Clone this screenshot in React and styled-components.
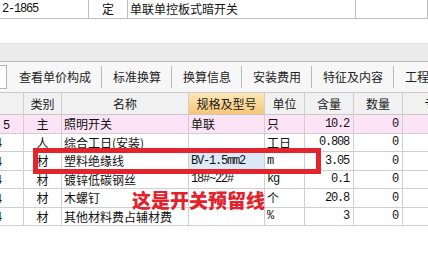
import React from 'react'
import styled, { createGlobalStyle } from 'styled-components'

const GlobalStyle = createGlobalStyle`
    body {
        margin: 0;
        background: #ffffff;
    }
`

const Page = styled.div`
    position: relative;
    width: 428px;
    height: 254px;
    overflow: hidden;
    background: #ffffff;
    font-family: "Noto Sans CJK SC", "Noto Sans", sans-serif;
    font-size: 12px;
    color: #111;
`

const TopRow = styled.div`
    display: grid;
    grid-template-columns: 89px 39px 228px 72px;
    height: 18px;
    border-bottom: 1px solid #bdbdbd;
`

const TopCell = styled.div`
    display: flex;
    align-items: center;
    justify-content: ${p => (p.$center ? 'center' : 'flex-start')};
    padding-left: ${p => (p.$center ? 0 : 2)}px;
    border-right: 1px solid #bdbdbd;
    white-space: nowrap;
    overflow: hidden;
    line-height: 18px;
`

const Mono = styled.span`
    font-family: "Liberation Mono", "DejaVu Sans Mono", monospace;
    font-size: 12px;
    letter-spacing: -1.2px;
`

const Blank = styled.div`
    height: 24px;
`

const GrayBand = styled.div`
    height: 17px;
    background: #ebebeb;
    border-top: 1px solid #e4e4e4;
    border-bottom: 1px solid #b9b9b9;
`

const Toolbar = styled.div`
    display: flex;
    align-items: center;
    height: 30px;
    background: #f7f7f7;
    border-bottom: 1px solid #c9c9c9;
    white-space: nowrap;
    overflow: hidden;

    & > * {
        flex-shrink: 0;
    }
`

const EdgeTab = styled.div`
    width: 6px;
    height: 22px;
    background: #ffffff;
    border: 1px solid #b5b5b5;
    border-left: none;
    margin-right: 1px;
`

const ToolButton = styled.div`
    padding: 0 10px 0 11px;
    font-size: 12px;
    line-height: 30px;
    color: #222;
`

const Divider = styled.div`
    width: 1px;
    height: 22px;
    background: #b8b8b8;
`

const Grid = styled.div`
    display: grid;
    grid-template-columns: 24px 38px 127px 76px 40px 49px 49px 68px;
`

const HeadCell = styled.div`
    height: 21px;
    display: flex;
    align-items: center;
    justify-content: center;
    background: ${p => (p.$active ? 'linear-gradient(#fde6b6, #f5c677)' : '#f1f1f1')};
    border-right: 1px solid #cfcfcf;
    border-bottom: 1px solid #c6c6c6;
    white-space: nowrap;
    overflow: hidden;
    color: #1a1a1a;
`

const Cell = styled.div`
    height: 17.5px;
    display: flex;
    align-items: center;
    justify-content: ${p => (p.$align === 'right' ? 'flex-end' : p.$align === 'center' ? 'center' : 'flex-start')};
    padding: ${p => (p.$align === 'right' ? '0 4px 0 0' : p.$align === 'center' ? '0' : '0 0 0 2px')};
    background: ${p => (p.$selected ? '#dceaf8' : p.$pink ? '#fce3f5' : '#ffffff')};
    border-right: 1px solid #cfcfcf;
    border-bottom: 1px solid #cfcfcf;
    white-space: nowrap;
    overflow: hidden;
`

const CodeText = styled.span`
    flex-shrink: 0;
    margin-left: ${p => p.$shift}px;
`

const Highlight = styled.div`
    position: absolute;
    left: 33px;
    top: 148px;
    width: 288px;
    height: 26px;
    box-sizing: border-box;
    border: 5px solid #e3242d;
`

const Note = styled.div`
    position: absolute;
    left: 132px;
    top: 190px;
    font-size: 19px;
    line-height: 19px;
    font-weight: 900;
    color: #e3222c;
    white-space: nowrap;
    text-shadow: 0 0 1px #fff;
`

const tools = ['查看单价构成', '标准换算', '换算信息', '安装费用', '特征及内容', '工程量明细']

const headers = ['', '类别', '名称', '规格及型号', '单位', '含量', '数量', '专业']

const rows = [
    { code: '5', shift: 1, kind: '主', name: '照明开关', spec: '单联', unit: '只', qty: '10.2', num: '0', pink: true },
    { code: '4', shift: -7, kind: '人', name: '综合工日(安装)', spec: '', unit: '工日', qty: '0.808', num: '0' },
    { code: '4', shift: -7, kind: '材', name: '塑料绝缘线', spec: 'BV-1.5mm2', unit: 'm', qty: '3.05', num: '0', selected: true },
    { code: '4', shift: -7, kind: '材', name: '镀锌低碳钢丝', spec: '18#~22#', unit: 'kg', qty: '0.1', num: '0' },
    { code: '4', shift: -7, kind: '材', name: '木螺钉', spec: '', unit: '个', qty: '20.8', num: '0' },
    { code: '4', shift: -7, kind: '材', name: '其他材料费占辅材费', spec: '', unit: '%', qty: '3', num: '0' },
]

const isLatin = s => /^[\x00-\x7f]*$/.test(s)

function Text({ value }) {
    if (value && isLatin(value)) return <Mono>{value}</Mono>
    return <>{value}</>
}

export default function App() {
    return (
        <Page>
            <GlobalStyle />
            <TopRow>
                <TopCell><Mono>2-1865</Mono></TopCell>
                <TopCell $center>定</TopCell>
                <TopCell>单联单控板式暗开关</TopCell>
                <TopCell />
            </TopRow>
            <Blank />
            <GrayBand />
            <Toolbar>
                <EdgeTab />
                {tools.map((t, i) => (
                    <React.Fragment key={t}>
                        {i > 0 && <Divider />}
                        <ToolButton>{t}</ToolButton>
                    </React.Fragment>
                ))}
            </Toolbar>
            <Grid>
                {headers.map((h, i) => (
                    <HeadCell key={i} $active={i === 3}>{h}</HeadCell>
                ))}
                {rows.map((r, i) => (
                    <React.Fragment key={i}>
                        <Cell $pink={r.pink}><CodeText $shift={r.shift}><Mono>{r.code}</Mono></CodeText></Cell>
                        <Cell $pink={r.pink} $align="center">{r.kind}</Cell>
                        <Cell $pink={r.pink}>{r.name}</Cell>
                        <Cell $pink={r.pink} $selected={r.selected}><Text value={r.spec} /></Cell>
                        <Cell $pink={r.pink}><Text value={r.unit} /></Cell>
                        <Cell $pink={r.pink} $align="right"><Mono>{r.qty}</Mono></Cell>
                        <Cell $pink={r.pink} $align="right"><Mono>{r.num}</Mono></Cell>
                        <Cell $pink={r.pink} />
                    </React.Fragment>
                ))}
            </Grid>
            <Highlight />
            <Note>这是开关预留线</Note>
        </Page>
    )
}
